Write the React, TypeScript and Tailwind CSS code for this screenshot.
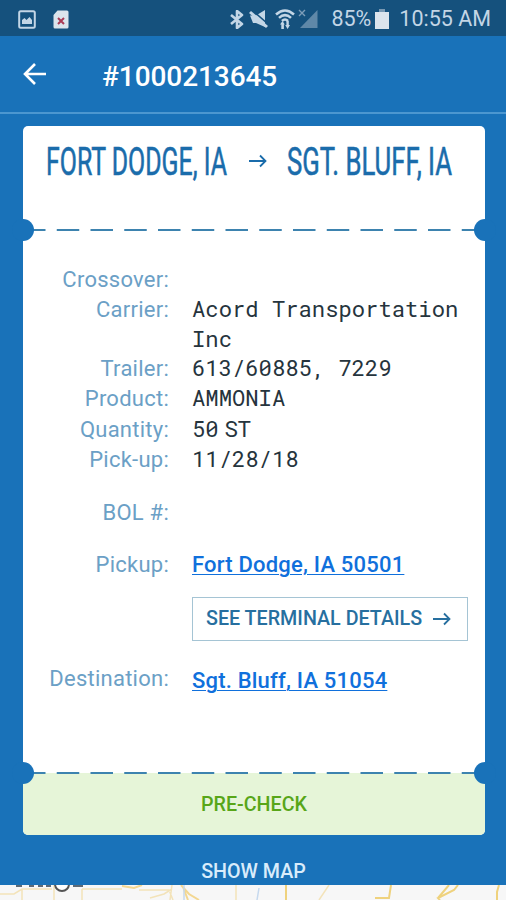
import type { ReactNode } from "react";

interface DetailRow {
  label: string;
  value?: ReactNode;
}

const details: DetailRow[] = [
  { label: "Crossover:" },
  { label: "Carrier:", value: "Acord Transportation Inc" },
  { label: "Trailer:", value: "613/60885, 7229" },
  { label: "Product:", value: "AMMONIA" },
  {
    label: "Quantity:",
    value: (
      <>
        50<span className="ml-[6px] font-['Roboto',sans-serif] text-[22px]">ST</span>
      </>
    ),
  },
  { label: "Pick-up:", value: "11/28/18" },
];

function StatusBar() {
  return (
    <div className="flex h-9 shrink-0 items-center bg-[#15517d] pt-[2px] pl-[18px] pr-[15px] text-[#c3d6e6]">
      {/* Notificaciones */}
      <svg width="18" height="19" viewBox="0 0 18 19">
        <rect x="1.2" y="1.2" width="15.6" height="16.6" rx="1.5" fill="none" stroke="currentColor" strokeWidth="2" />
        <path d="M4 14V10l2.5-2 2 2 3-3L14 10v4z" fill="currentColor" />
      </svg>
      <svg width="16" height="19" viewBox="0 0 16 19" className="ml-[17px]">
        <path d="M4.500 0.500H14A1.500 1.500 0 0 1 15.500 2V17A1.500 1.500 0 0 1 14 18.500H2A1.500 1.500 0 0 1 .5 17V5z" fill="#dbe4ec" />
        <path d="M5 8l6 6M11 8l-6 6" stroke="#a93a55" strokeWidth="2" />
      </svg>

      {/* Sistema */}
      <svg width="14" height="19" viewBox="0 0 14 19" className="ml-auto">
        <path d="M1 5l11 9-5 4V1l5 4-11 9" fill="none" stroke="currentColor" strokeWidth="2.600" strokeLinejoin="round" />
      </svg>
      <svg width="19" height="19" viewBox="0 0 19 19" className="ml-[5px]">
        <path d="M1 5.500h6L16 0v17l-9-4H4z" fill="currentColor" />
        <path d="M3 0l17 15" stroke="#15517d" strokeWidth="1.500" />
        <path d="M1 2l17 15" stroke="currentColor" strokeWidth="3" />
      </svg>
      <svg width="20" height="20" viewBox="0 0 20 20" className="ml-[7px]">
        <g fill="none" stroke="currentColor" strokeWidth="2.500">
          <path d="M1 5.500q9-8 18 0M4 8.900q6-5.500 12 0M7 12q3-3 6 0" />
        </g>
        <path d="M5 15.500L7.500 12l2.300 3.500H8.900V20H6.300v-4.500zM15 16l-2.400 4-2.400-4h1.200v-4h2.400v4z" fill="currentColor" />
      </svg>
      <svg width="20" height="20" viewBox="0 0 20 20" className="ml-[3px]">
        <path d="M19.500 1v18H2z" fill="#5f88a8" />
        <path d="M1 1l6 6M7 1L1 7" stroke="#7d9db8" strokeWidth="1.400" />
      </svg>
      <span className="ml-[13px] text-[21.500px] leading-none">85%</span>
      <svg width="14" height="20" viewBox="0 0 14 20" className="ml-[4px]">
        <path d="M4 0h6v3h4v17H0V3h4z" fill="#dbe4ec" />
        <path d="M4 0h6v3H4z" fill="#7898b2" />
      </svg>
      <span className="ml-[10px] text-[21.500px] leading-none">10:55 AM</span>
    </div>
  );
}

function Arrow({ className }: { className?: string }) {
  return (
    <svg width="18" height="14" viewBox="0 0 18 14" className={className} fill="none" stroke="currentColor">
      <path d="M0 7h16.500M11 1.500L16.500 7 11 12.500" strokeWidth="1.800" />
    </svg>
  );
}

function Perforation() {
  return (
    <div className="relative h-[2px]">
      <svg width="462" height="2" className="absolute left-0 top-0">
        <line x1="0" y1="1" x2="462" y2="1" stroke="#3d83af" strokeWidth="2" strokeDasharray="22.500 11.250" />
      </svg>
      <div className="absolute -left-[11px] -top-[10px] size-[22px] rounded-full bg-[#1972b9]" />
      <div className="absolute -right-[11px] -top-[10px] size-[22px] rounded-full bg-[#1972b9]" />
    </div>
  );
}

function Row({ label, children }: { label: string; children?: ReactNode }) {
  return (
    <div className="flex items-start">
      <div className="w-[146px] shrink-0 text-right tracking-[0.250px] text-[#6ba0c6]">{label}</div>
      <div className="ml-[23px] flex-1">{children}</div>
    </div>
  );
}

function MapStrip() {
  return (
    <svg width="506" height="15" viewBox="0 0 506 15" className="block shrink-0 bg-[#f7f7f7]" fill="none">
      <path d="M0 9h14l8-5h30M22 4v11M54 0v15M82 4v11M82 4h40M139 5h30l4 10M172 0l-2 15M236 0v15M150 13l14-4 8-5" stroke="#f3e3b9" strokeWidth="1.500" />
      <path d="M122 1l12 2 8-3M181 0l8 9 10 6M183 2l5 13" stroke="#f3d791" strokeWidth="2" />
      <path d="M184 0v15M259 3l-2 12" stroke="#c6d9ee" strokeWidth="1.500" />
      <path d="M286 0v15M375 13h14l2-13M458 0l-4 5-16 8 2 2M449 0l-11 13M499 0l-2 7v8" stroke="#efd27d" strokeWidth="2" />
      <path d="M329 0l-10 15" stroke="#f3e3b9" strokeWidth="1.500" />
      <path d="M16 1h6M29 1h5M38 1h5M46 1h5M73 1h10" stroke="#5d6a77" strokeWidth="2" />
      <circle cx="62" cy="-1" r="7" fill="#fff" stroke="#555" strokeWidth="2" />
    </svg>
  );
}

export default function App() {
  return (
    <div className="flex h-[900px] w-[506px] flex-col overflow-hidden bg-[#1972b9] font-['Roboto',sans-serif]">
      <StatusBar />

      <header className="flex h-[78px] shrink-0 items-center border-b-2 border-[#4c97d0] pl-[23px] text-white">
        <svg width="24" height="22" viewBox="0 0 24 22" fill="none" stroke="currentColor" strokeWidth="2.600">
          <path d="M23 11H2M12 1L2 11l10 10" />
        </svg>
        <h1 className="ml-[55px] mt-[5px] text-[28px] font-medium tracking-[-0.080px]">#1000213645</h1>
      </header>

      <main className="ml-[23px] mt-3 flex h-[709px] w-[462px] shrink-0 flex-col rounded-[5px] bg-white">
        {/* Ruta */}
        <div className="flex h-[103px] shrink-0 pl-[23px] pt-[12px] text-[39.500px] leading-[48px] text-[#1a6cab]">
          <div className="w-[203px]">
            <span className="inline-block origin-left scale-x-[0.63] whitespace-nowrap [-webkit-text-stroke:0.600px]">FORT DODGE, IA</span>
          </div>
          <Arrow className="mt-[16px]" />
          <div className="ml-5 w-[170px]">
            <span className="inline-block origin-left scale-x-[0.650] whitespace-nowrap [-webkit-text-stroke:0.600px]">SGT. BLUFF, IA</span>
          </div>
        </div>

        <Perforation />

        {/* Detalles */}
        <div className="h-[541px] shrink-0 pt-[34px] text-[22px] leading-[30.200px]">
          {details.map((row) => (
            <Row key={row.label} label={row.label}>
              <span className="-mt-px block font-['Roboto_Mono','DejaVu_Sans_Mono',monospace] text-[22.200px] leading-[30px] text-[#26343d]">
                {row.value}
              </span>
            </Row>
          ))}
          <div className="mt-[23px]">
            <Row label="BOL #:" />
          </div>
          <div className="mt-[22px]">
            <Row label="Pickup:">
              <a className="block font-medium tracking-[0.200px] text-[#1070dc] underline decoration-1 underline-offset-[2px]">Fort Dodge, IA 50501</a>
              <button className="mt-[17px] flex h-11 w-[276px] items-center border-[1.500px] border-[#a5c4d4] pl-[13px] text-[19.700px] font-medium text-[#276f9f]">
                SEE TERMINAL DETAILS
                <Arrow className="ml-[11px]" />
              </button>
            </Row>
          </div>
          <div className="mt-[23px]">
            <Row label="Destination:">
              <a className="mt-[2px] block font-medium tracking-[0.200px] text-[#1070dc] underline decoration-1 underline-offset-[2px]">Sgt. Bluff, IA 51054</a>
            </Row>
          </div>
        </div>

        <Perforation />
        <button className="-mt-px flex flex-1 items-center justify-center rounded-b-[5px] bg-[#e6f5d8] pt-[2px] text-[19.700px] font-medium text-[#58a618]">
          PRE-CHECK
        </button>
      </main>

      <button className="h-[50px] shrink-0 pt-[23px] pl-px text-[19.700px] leading-[27px] font-medium text-[#d9ecfb]">SHOW MAP</button>
      <MapStrip />
    </div>
  );
}
